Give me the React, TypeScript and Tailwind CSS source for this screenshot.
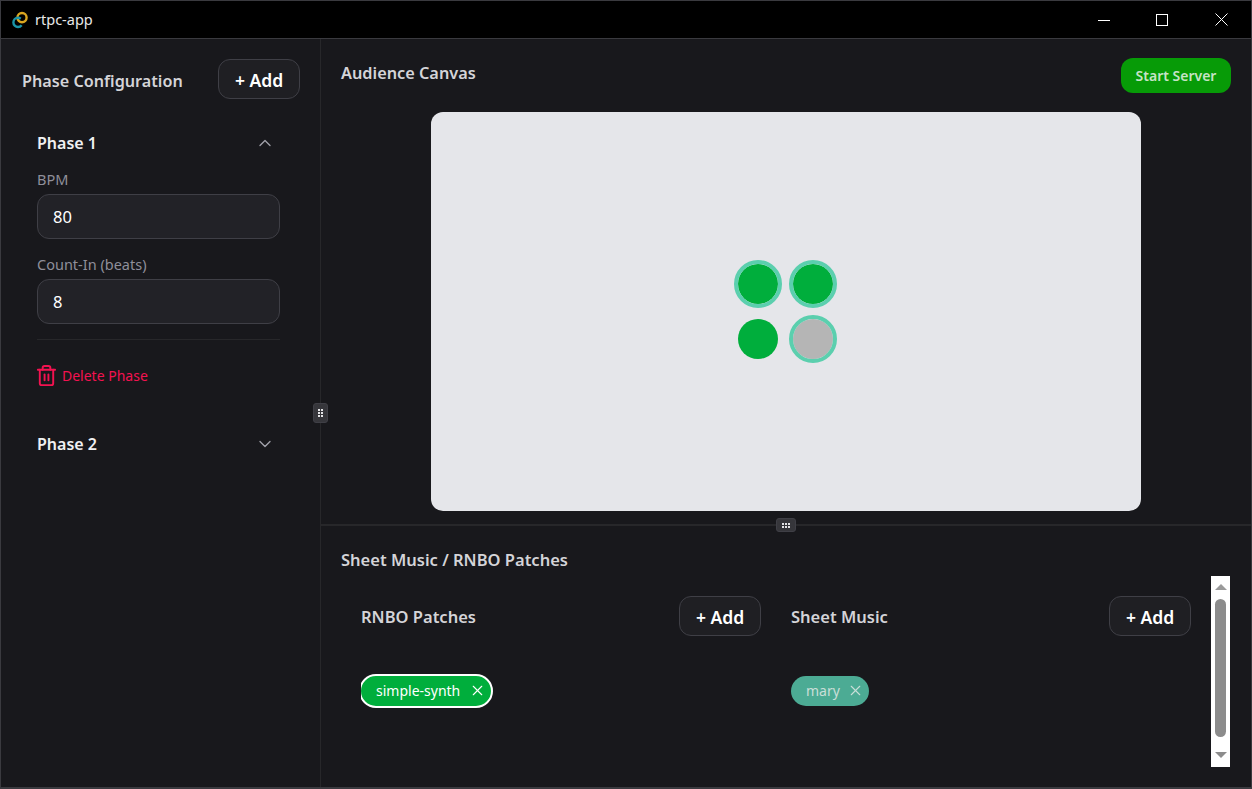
import { ChevronDown, ChevronUp, Trash2, X } from "lucide-react";

function AddButton() {
  return (
    <button className="h-10 w-[82px] rounded-xl border border-[#3f3f46] bg-[#1f1f23] pt-[2px] text-[17.5px] font-semibold text-white">
      + Add
    </button>
  );
}

function Field({ label, value }: { label: string; value: string }) {
  return (
    <div className="flex flex-col">
      <label className="h-[25px] text-[14.5px] leading-[20px] text-[#8f8f9a]">{label}</label>
      <div className="flex h-[45px] items-center rounded-xl border border-[#3f3f46] bg-[#222227] px-[15px] pt-[2px] text-[16.5px] text-white">
        {value}
      </div>
    </div>
  );
}

function Chip({ label, active }: { label: string; active?: boolean }) {
  if (active) {
    return (
      <div className="overflow-hidden">
        <div className="-ml-[2px] flex h-[34px] w-[134px] items-center justify-between rounded-full border-2 border-white bg-[#00ae3c] pl-[15px] pr-[5px] text-[14px] text-white">
          <span>{label}</span>
          <X size={17} strokeWidth={1.5} />
        </div>
      </div>
    );
  }
  return (
    <div className="flex h-[30px] w-[78px] items-center justify-between rounded-full bg-[#4cab94] pl-[15px] pr-[5px] text-[14px] text-[#c9ded8]">
      <span>{label}</span>
      <X size={17} strokeWidth={1.5} />
    </div>
  );
}

function Dot({ filled, ring }: { filled: boolean; ring: boolean }) {
  return (
    <div
      className={`h-10 w-10 rounded-full ${filled ? "bg-[#00ae3c]" : "bg-[#b5b5b5]"} ${
        ring ? "outline-4 outline-[#5bcfae]" : ""
      }`}
    />
  );
}

function DotGrid({ cols, rows }: { cols: number; rows: number }) {
  const dots = [];
  for (let c = 0; c < cols; c++) {
    for (let r = 0; r < rows; r++) {
      dots.push(<rect key={`${c}-${r}`} x={c * 3} y={r * 3} width="2" height="2" fill="#e4e4e7" />);
    }
  }
  return (
    <svg width={cols * 3 - 1} height={rows * 3 - 1}>
      {dots}
    </svg>
  );
}

export default function App() {
  return (
    <div
      className="relative flex h-[789px] w-[1252px] flex-col overflow-hidden border border-b-2 border-[#3a3a3f] bg-[#18181c] text-white"
      style={{ fontFamily: '"Noto Sans", "Open Sans", sans-serif' }}
    >
      {/* title bar */}
      <div className="flex h-[38px] shrink-0 items-center border-b border-[#3a3a3f] bg-black">
        <svg width="18" height="18" viewBox="0 0 18 18" fill="none" className="ml-[10px]">
          <circle cx="11" cy="6.6" r="4.6" stroke="#d9a520" strokeWidth="2.4" />
          <circle cx="7" cy="11.4" r="4.6" stroke="#1a95a8" strokeWidth="2.4" strokeDasharray="21 8" strokeDashoffset="-3" />
        </svg>
        <span className="ml-[6px] text-[14.5px] text-[#e8e8e8]">rtpc-app</span>
        <div className="ml-auto flex h-full">
          <div className="flex w-[58px] items-center justify-center">
            <svg width="12" height="12">
              <path d="M0 6.5H12" stroke="#fff" />
            </svg>
          </div>
          <div className="flex w-[58px] items-center justify-center">
            <svg width="12" height="12">
              <rect x="0.5" y="0.5" width="11" height="11" fill="none" stroke="#fff" />
            </svg>
          </div>
          <div className="flex w-[60px] items-center justify-center">
            <svg width="13" height="13">
              <path d="M0.5 0.5L12.5 12.5M12.5 0.5L0.5 12.5" stroke="#fff" />
            </svg>
          </div>
        </div>
      </div>

      <div className="flex min-h-0 flex-1">
        {/* phase sidebar */}
        <aside className="relative w-[320px] shrink-0 border-r border-[#27272a] pl-[21px] pr-[20px] pt-[20px]">
          <div className="flex items-center justify-between">
            <h2 className="pt-[4px] text-[16.2px] font-semibold text-[#d4d4d8]">Phase Configuration</h2>
            <AddButton />
          </div>
          <div className="mt-[24px] pl-[15px] pr-[20px]">
            <div className="flex h-10 items-center justify-between">
              <span className="text-[16px] font-semibold text-[#f0f0f2]">Phase 1</span>
              <ChevronUp size={20} strokeWidth={1.6} className="mr-[5px] text-[#a1a1aa]" />
            </div>
            <div className="mt-[6px] flex flex-col gap-[15px]">
              <Field label="BPM" value="80" />
              <Field label="Count-In (beats)" value="8" />
            </div>
            <div className="mt-[15px] h-px bg-[#27272a]" />
            <div className="-ml-[2px] mt-[24px] flex items-center gap-[4px] text-[14px] text-[#f31250]">
              <Trash2 size={23} strokeWidth={2} />
              <span>Delete Phase</span>
            </div>
            <div className="mt-[37px] flex h-10 items-center justify-between">
              <span className="text-[16px] font-semibold text-[#f0f0f2]">Phase 2</span>
              <ChevronDown size={20} strokeWidth={1.6} className="mr-[5px] text-[#a1a1aa]" />
            </div>
          </div>
          <div className="absolute right-[-8px] top-[364px] flex h-[20px] w-[15px] items-center justify-center rounded-[3px] border border-[#3f3f46] bg-[#36363b]">
            <DotGrid cols={2} rows={3} />
          </div>
        </aside>

        <main className="flex min-w-0 flex-1 flex-col">
          {/* canvas panel */}
          <section className="relative h-[487px] shrink-0 border-b-2 border-[#27272a] pt-[19px]">
            <div className="flex items-start justify-between pl-[20px] pr-[20px]">
              <h2 className="mt-[3px] text-[16.3px] font-semibold text-[#d4d4d8]">Audience Canvas</h2>
              <button className="h-[35px] w-[110px] rounded-xl bg-[#079b07] text-[14px] font-semibold text-[#c6e3c6]">
                Start Server
              </button>
            </div>
            <div className="ml-[110px] mt-[19px] flex h-[399px] w-[710px] items-center justify-center rounded-xl bg-[#e5e6ea] pr-px">
              <div className="grid grid-cols-2 gap-[15px]">
                <Dot filled ring />
                <Dot filled ring />
                <Dot filled ring={false} />
                <Dot filled={false} ring />
              </div>
            </div>
            <div className="absolute bottom-[-8px] left-[455px] flex h-[14px] w-[20px] items-center justify-center rounded-[3px] border border-[#3f3f46] bg-[#36363b]">
              <DotGrid cols={3} rows={2} />
            </div>
          </section>

          {/* patches panel */}
          <section className="flex min-h-0 flex-1 pl-[20px] pr-[21px]">
            <div className="min-w-0 flex-1 pt-[22px]">
              <h2 className="text-[16.5px] font-semibold text-[#d4d4d8]">Sheet Music / RNBO Patches</h2>
              <div className="mt-[23px] flex gap-[30px] pl-[20px] pr-[20px]">
                <div className="flex w-[400px] flex-col">
                  <div className="flex items-center justify-between">
                    <span className="pt-[4px] text-[16.5px] font-semibold text-[#d4d4d8]">RNBO Patches</span>
                    <AddButton />
                  </div>
                  <div className="mt-[38px]">
                    <Chip label="simple-synth" active />
                  </div>
                </div>
                <div className="flex w-[400px] flex-col">
                  <div className="flex items-center justify-between">
                    <span className="pt-[4px] text-[16.5px] font-semibold text-[#d4d4d8]">Sheet Music</span>
                    <AddButton />
                  </div>
                  <div className="mt-[40px]">
                    <Chip label="mary" />
                  </div>
                </div>
              </div>
            </div>
            {/* scrollbar */}
            <div className="mt-[50px] flex h-[191px] w-[19px] shrink-0 flex-col items-center bg-white">
              <div className="mt-[8px] h-0 w-0 border-x-[6px] border-b-[6px] border-x-transparent border-b-[#9a9a9a]" />
              <div className="mt-[9px] h-[138px] w-[11px] rounded-full bg-[#8c8c8c]" />
              <div className="mt-[15px] h-0 w-0 border-x-[6px] border-t-[6px] border-x-transparent border-t-[#8c8c8c]" />
            </div>
          </section>
        </main>
      </div>
    </div>
  );
}
